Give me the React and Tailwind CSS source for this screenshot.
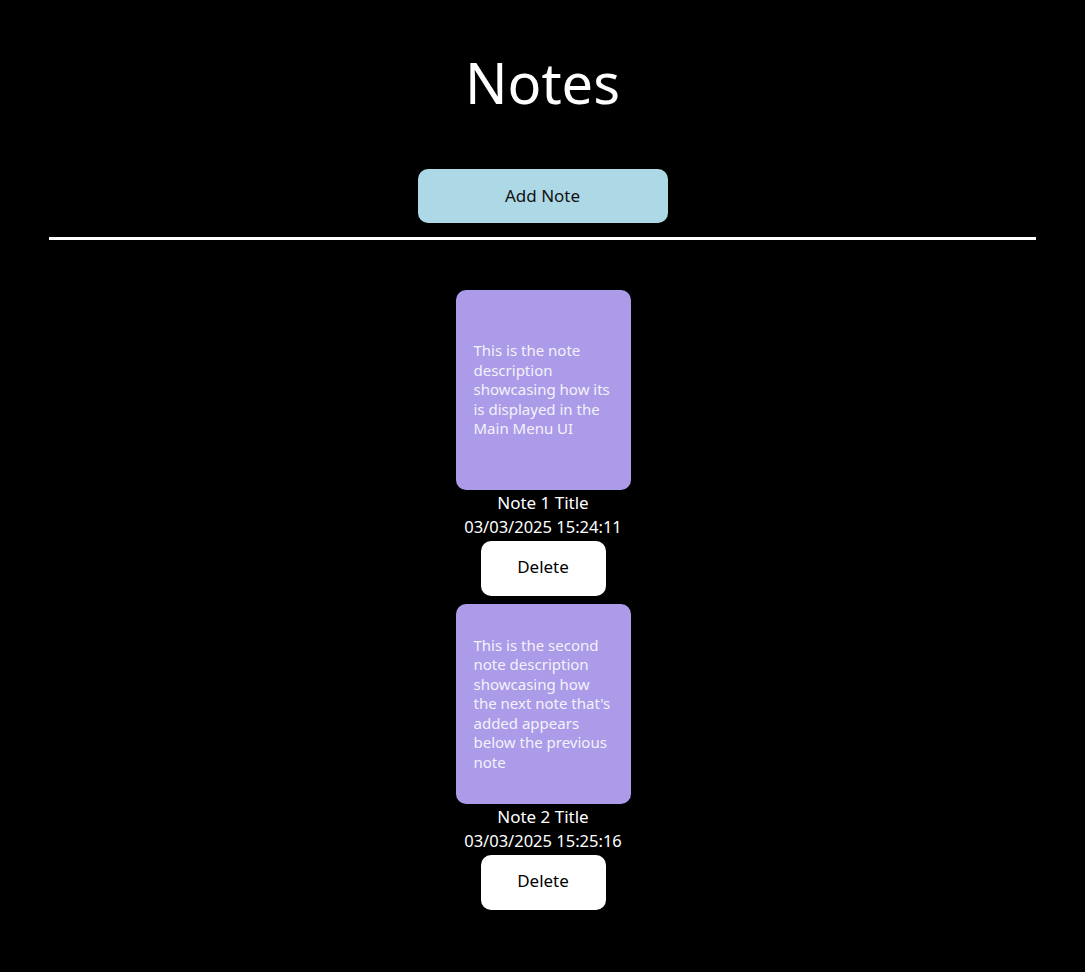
const notes = [
  {
    id: 1,
    title: 'Note 1 Title',
    date: '03/03/2025 15:24:11',
    body: 'This is the note description showcasing how its is displayed in the Main Menu UI',
  },
  {
    id: 2,
    title: 'Note 2 Title',
    date: '03/03/2025 15:25:16',
    body: "This is the second note description showcasing how the next note that's added appears below the previous note",
  },
];

export default function App() {
  return (
    <div className="min-h-[972px] bg-black font-['Noto_Sans',sans-serif] text-white">
      {/* Header */}
      <div className="flex flex-col items-center pt-[38px]">
        <h1 className="text-[56px] leading-[88px] font-normal">Notes</h1>
        <button className="mt-[43px] h-[54px] w-[250px] rounded-[10px] bg-[#add8e6] text-[17px] text-[#111]">
          Add Note
        </button>
      </div>
      <div className="mx-[49px] mt-[14px] h-[3px] bg-white" />

      {/* Lista catatan */}
      <div className="mt-[50px] flex flex-col items-center gap-[8px] pl-[1px]">
        {notes.map((note) => (
          <div key={note.id} className="flex flex-col items-center">
            <div className="flex h-[200px] w-[175px] items-center rounded-[10px] bg-[#ab9be8] px-[18px] text-[15px] leading-[19.5px] text-[#f4f2fb]">
              <p>{note.body}</p>
            </div>
            <div className="mt-[1px] text-[17px] leading-[24px]">{note.title}</div>
            <div className="text-[16.5px] leading-[24px]">{note.date}</div>
            <button className="mt-[2px] h-[55px] w-[125px] rounded-[10px] bg-white pb-[4px] text-[17px] text-black">
              Delete
            </button>
          </div>
        ))}
      </div>
    </div>
  );
}
